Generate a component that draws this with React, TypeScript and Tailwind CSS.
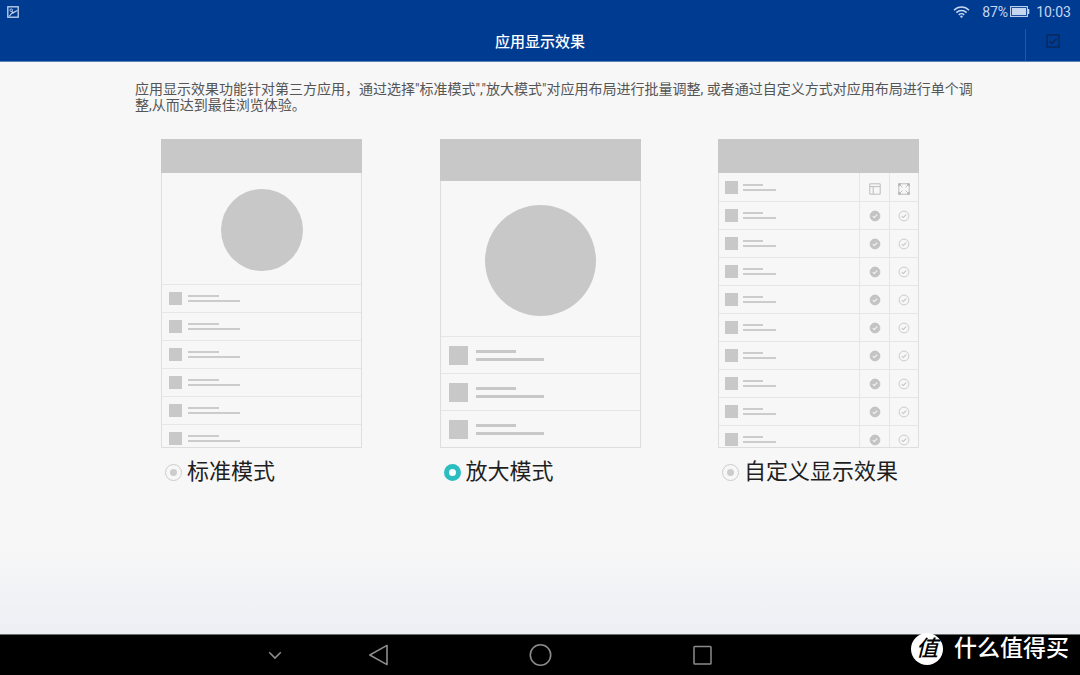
import { useState } from 'react';
import type { ReactNode } from 'react';

type Mode = 'standard' | 'zoomed' | 'custom';

const MODES: { id: Mode; label: string; preview: ReactNode }[] = [
  { id: 'standard', label: '标准模式', preview: <StandardPreview /> },
  { id: 'zoomed', label: '放大模式', preview: <ZoomedPreview /> },
  { id: 'custom', label: '自定义显示效果', preview: <CustomPreview /> },
];

function StatusBar() {
  return (
    <div className="flex h-[23px] items-center justify-between pl-[7px] pr-[9px] text-[#c6d6ee]">
      <svg className="size-3" viewBox="0 0 12 12" fill="none" stroke="currentColor">
        <rect x="0.8" y="0.8" width="10.4" height="10.4" strokeWidth="1.3" />
        <circle cx="4.2" cy="4.2" r="1.3" strokeWidth="0.9" />
        <path d="M2.2 10.2C3.4 9.6 4 7 6 6.6C8 6.2 9 5 10.4 4.4M4.8 5.4L6.4 7.6" strokeWidth="1.1" />
      </svg>
      <div className="flex items-center">
        <svg className="mr-3 h-3 w-[17px]" viewBox="0 0 17 12" fill="none" stroke="currentColor" strokeWidth="1.5">
          <path d="M1 4.2C5.2 0 11.8 0 16 4.2" />
          <path d="M3.4 6.6C6.2 3.8 10.8 3.8 13.6 6.6" />
          <path d="M5.8 8.9C7.3 7.4 9.7 7.4 11.2 8.9" />
          <circle cx="8.5" cy="10.6" r="1.2" fill="currentColor" stroke="none" />
        </svg>
        <span className="text-sm">87%</span>
        <svg className="ml-0.5 mr-[6px] h-[11px] w-5" viewBox="0 0 20 11" fill="none">
          <rect x="0.6" y="0.6" width="16.8" height="9.8" stroke="currentColor" strokeWidth="1.1" />
          <rect x="2" y="2" width="14" height="7" fill="currentColor" />
          <path d="M18.6 3v5" stroke="currentColor" strokeWidth="1.4" />
        </svg>
        <span className="text-sm">10:03</span>
      </div>
    </div>
  );
}

function Header() {
  return (
    <header className="border-b border-[#5c7fb8] bg-[#003b92]">
      <StatusBar />
      <div className="grid grid-cols-[1fr_auto_1fr] items-center">
        <h1 className="col-start-2 text-[15px] font-medium leading-[38px] text-white">应用显示效果</h1>
        <div className="flex justify-end self-end">
          <button aria-label="确定" className="flex h-8 w-[55px] items-center justify-center border-l border-[#27559f] pb-2">
            <svg className="size-3.5" viewBox="0 0 14 14" fill="none" stroke="#0c2352">
              <rect x="1" y="1" width="12" height="12" strokeWidth="1.2" />
              <path d="M3.6 7.2L6 9.4L10.4 4.8" strokeWidth="1.3" />
            </svg>
          </button>
        </div>
      </div>
    </header>
  );
}

function StandardPreview() {
  return (
    <>
      <div className="h-[34px] shrink-0 bg-[#c8c8c8]" />
      <div className="flex-1 overflow-hidden border border-t-0 border-[#dedede]">
        <div className="flex h-[111px] items-center justify-center pt-[2px]">
          <div className="size-[82px] rounded-full bg-[#c8c8c8]" />
        </div>
        {[0, 1, 2, 3, 4, 5].map((row) => (
          <div key={row} className="flex h-7 items-center gap-[6px] border-t border-[#e6e6e6] pl-[7px]">
            <div className="size-[13px] bg-[#c8c8c8]" />
            <div className="space-y-[3px]">
              <div className="h-[2px] w-[31px] bg-[#cccccc]" />
              <div className="h-[2px] w-[52px] bg-[#cccccc]" />
            </div>
          </div>
        ))}
      </div>
    </>
  );
}

function ZoomedPreview() {
  return (
    <>
      <div className="h-[42px] shrink-0 bg-[#c8c8c8]" />
      <div className="flex-1 overflow-hidden border border-t-0 border-[#dedede]">
        <div className="flex h-[155px] items-center justify-center pb-[5px] pt-2">
          <div className="size-[111px] rounded-full bg-[#c8c8c8]" />
        </div>
        {[0, 1, 2].map((row) => (
          <div key={row} className="flex h-[37px] items-center gap-2 border-t border-[#e6e6e6] pl-2">
            <div className="size-[19px] bg-[#c8c8c8]" />
            <div className="space-y-[5px]">
              <div className="h-[3px] w-10 bg-[#c8c8c8]" />
              <div className="h-[3px] w-[68px] bg-[#c8c8c8]" />
            </div>
          </div>
        ))}
      </div>
    </>
  );
}

function LayoutIcon() {
  return (
    <svg className="size-3" viewBox="0 0 12 12" fill="none" stroke="#bdbdbd">
      <path d="M0.8 0.8H11.2V11.2H0.8ZM0.8 3.6H11.2M4.2 3.6V11.2" />
    </svg>
  );
}

function ExpandIcon() {
  return (
    <svg className="size-3" viewBox="0 0 12 12" fill="none" stroke="#bdbdbd">
      <rect x="0.8" y="0.8" width="10.4" height="10.4" />
      <path d="M2 2L4.4 4.4M10 2L7.6 4.4M2 10L4.4 7.6M10 10L7.6 7.6" />
      <path d="M0.5 0.5h3L0.5 3.5ZM11.5 0.5v3L8.5 0.5ZM0.5 11.5V8.5l3 3ZM11.5 11.5H8.5l3-3Z" fill="#aaaaaa" stroke="none" />
    </svg>
  );
}

function CheckDot({ filled = false }: { filled?: boolean }) {
  return (
    <svg className="size-3" viewBox="0 0 12 12" fill="none">
      <circle cx="6" cy="6" r="4.9" fill={filled ? '#c4c4c4' : 'none'} stroke={filled ? '#c4c4c4' : '#cccccc'} />
      <path d="M3.8 6.2L5.3 7.6L8.2 4.6" stroke={filled ? '#f7f7f7' : '#c4c4c4'} strokeWidth="1.1" />
    </svg>
  );
}

function CustomPreview() {
  return (
    <>
      <div className="h-[34px] shrink-0 bg-[#c8c8c8]" />
      <div className="flex-1 overflow-hidden border border-t-0 border-[#dedede]">
        {[0, 1, 2, 3, 4, 5, 6, 7, 8, 9].map((row) => (
          <div key={row} className="group flex h-7 border-b border-[#e6e6e6] first:h-[29px]">
            <div className="flex flex-1 items-center gap-[5px] pl-[6px]">
              <div className="size-[13px] bg-[#c8c8c8]" />
              <div className="space-y-[3px]">
                <div className="h-[2px] w-5 bg-[#cccccc]" />
                <div className="h-[2px] w-[33px] bg-[#cccccc]" />
              </div>
            </div>
            <div className="flex w-[30px] items-center justify-center border-l border-[#e6e6e6] group-first:pt-1">
              {row === 0 ? <LayoutIcon /> : <CheckDot filled />}
            </div>
            <div className="flex w-[29px] items-center justify-center border-l border-[#e6e6e6] group-first:pt-1">
              {row === 0 ? <ExpandIcon /> : <CheckDot />}
            </div>
          </div>
        ))}
      </div>
    </>
  );
}

function NavBar() {
  return (
    <nav className="grid h-[41px] grid-cols-[1fr_162px_162px_162px_1fr] border-t border-[#6b706f] bg-black text-[#8c8c8c]">
      <button aria-label="收起" className="flex items-center justify-end pr-[14px]">
        <svg className="size-4" viewBox="0 0 16 16" fill="none" stroke="currentColor" strokeWidth="1.6">
          <path d="M2.2 5.2L8 11L13.8 5.2" />
        </svg>
      </button>
      <button aria-label="返回" className="flex items-center justify-center">
        <svg className="size-6" viewBox="0 0 24 24" fill="none" stroke="currentColor" strokeWidth="1.6" strokeLinejoin="round">
          <path d="M3.8 12L21 2.4V21.6Z" />
        </svg>
      </button>
      <button aria-label="主页" className="flex items-center justify-center">
        <svg className="size-6" viewBox="0 0 24 24" fill="none" stroke="currentColor" strokeWidth="1.6">
          <circle cx="12.5" cy="12" r="10.2" />
        </svg>
      </button>
      <button aria-label="最近任务" className="flex items-center justify-center">
        <svg className="size-6" viewBox="0 0 24 24" fill="none" stroke="currentColor" strokeWidth="1.5">
          <rect x="4" y="3.5" width="17" height="17.5" rx="0.8" />
        </svg>
      </button>
    </nav>
  );
}

export default function App() {
  const [mode, setMode] = useState<Mode>('zoomed');

  return (
    <div className="relative flex min-h-screen flex-col bg-[#f7f7f7] font-[Roboto,'Noto_Sans_CJK_SC',sans-serif]">
      <Header />

      <main className="flex-1 bg-linear-to-b from-[#f7f7f7] from-85% to-[#edeff5] px-6 pt-[19px]">
        <div className="mx-auto max-w-[810px]">
          <p className="whitespace-nowrap text-sm leading-4 text-[#555555]">
            应用显示效果功能针对第三方应用，通过选择"标准模式","放大模式"对应用布局进行批量调整, 或者通过自定义方式对应用布局进行单个调
            <br />
            整,从而达到最佳浏览体验。
          </p>

          {/* Mode picker */}
          <div className="mt-[26px] flex justify-between px-[26px]">
            {MODES.map((m) => (
              <label key={m.id} className="w-[201px] cursor-pointer">
                <div className="flex h-[309px] flex-col">{m.preview}</div>
                <div className="mt-2 flex items-center gap-[5px] pl-1">
                  <input
                    type="radio"
                    name="mode"
                    value={m.id}
                    checked={mode === m.id}
                    onChange={() => setMode(m.id)}
                    className="size-[17px] shrink-0 appearance-none rounded-full border border-[#cccccc] bg-[#cccccc] bg-clip-content p-1 checked:border-[5px] checked:border-[#2bbdc0] checked:bg-white checked:p-0"
                  />
                  <span className="whitespace-nowrap text-[22px] leading-8 text-[#1f1f1f]">{m.label}</span>
                </div>
              </label>
            ))}
          </div>
        </div>
      </main>

      <NavBar />

      {/* Site mark over the bottom right corner */}
      <div className="absolute bottom-[10px] right-[11px] flex items-center gap-[11px] text-white">
        <span className="flex size-8 items-center justify-center rounded-full bg-white text-[22px] font-medium italic leading-8 text-black">
          值
        </span>
        <span className="text-[23px] font-medium leading-8">什么值得买</span>
      </div>
    </div>
  );
}
